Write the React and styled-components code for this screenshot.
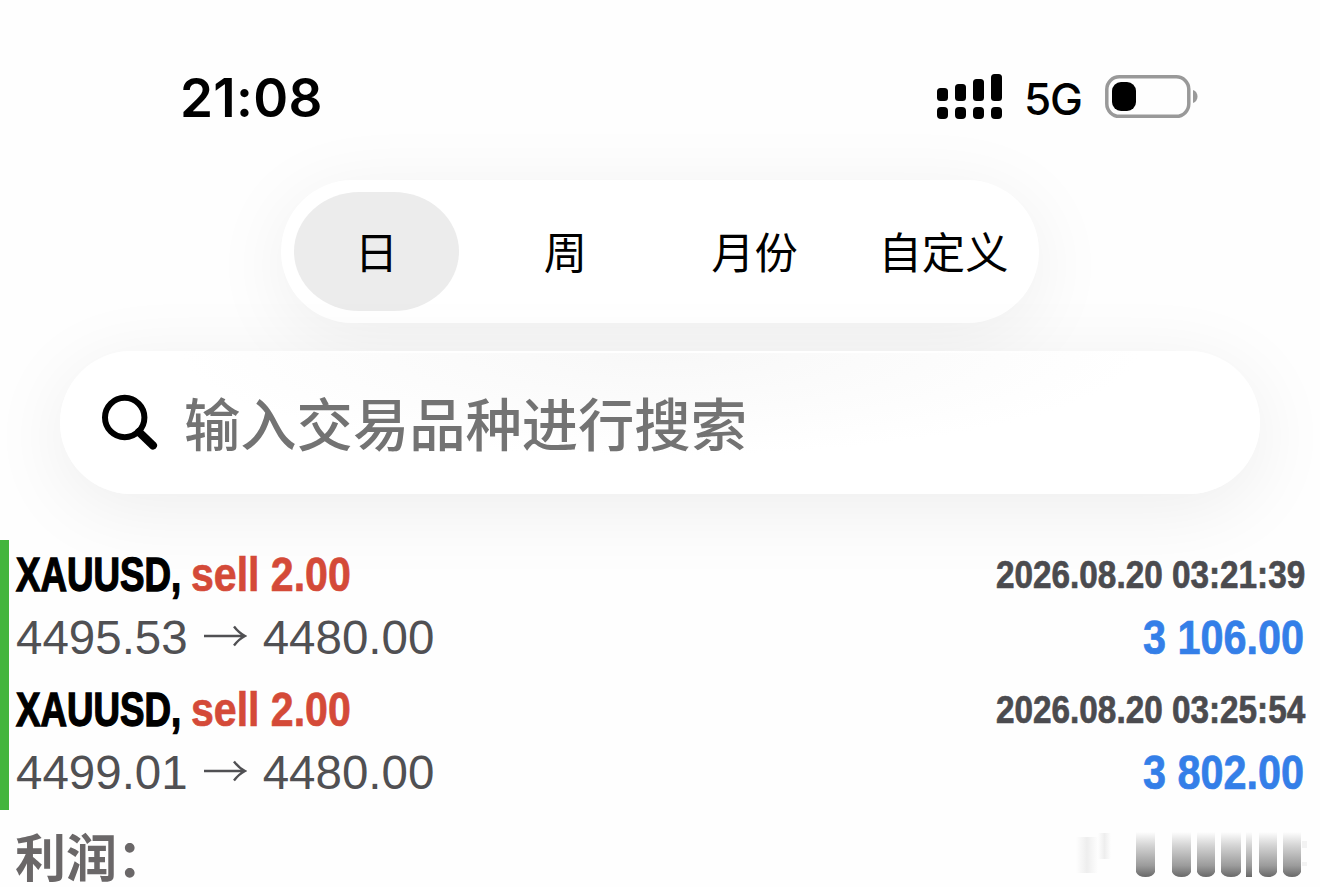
import React from "react";
import styled, { createGlobalStyle } from "styled-components";

const GlobalStyle = createGlobalStyle`
  * {
    box-sizing: border-box;
  }

  body {
    margin: 0;
    background-color: #fefefe;
    overflow: hidden;
  }
`;

const Screen = styled.div`
  width: 1320px;
  height: 887px;
  display: flex;
  flex-direction: column;
  overflow: hidden;
  font-family: "Liberation Sans", "Noto Sans CJK SC", sans-serif;
`;

const StatusBar = styled.header`
  flex: none;
  height: 180px;
  padding: 62px 122px 0 180px;
  display: flex;
  justify-content: space-between;
  align-items: flex-start;
  font-family: Inter, sans-serif;
  color: #000000;
`;

const Time = styled.span`
  font-size: 53px;
  font-weight: 600;
  line-height: 73px;
  letter-spacing: 0.3px;
`;

const StatusIcons = styled.div`
  height: 70px;
  display: flex;
  align-items: center;
`;

const Network = styled.span`
  width: 58px;
  margin: 4px 23px 0 21px;
  font-size: 44px;
  font-weight: 500;
  line-height: 60px;
  letter-spacing: -1.2px;
  white-space: nowrap;
`;

const Tabs = styled.nav`
  flex: none;
  width: 758px;
  height: 143px;
  margin-left: 281px;
  padding: 12px 13px;
  display: flex;
  gap: 24px;
  border-radius: 72px;
  background-color: #ffffff;
  box-shadow: 0 14px 80px rgba(0, 0, 0, 0.068);
`;

const Tab = styled.button`
  width: 165px;
  height: 119px;
  padding: 0 0 3px;
  border: none;
  border-radius: 66px / 60px;
  background-color: ${(props) => (props.$active ? "#ececec" : "transparent")};
  color: #000000;
  font-family: Inter, "Noto Sans CJK SC", sans-serif;
  font-size: 43.3px;
  white-space: nowrap;
`;

const SearchBox = styled.div`
  flex: none;
  position: relative;
  width: 1200px;
  height: 143px;
  margin: 28px 0 46px 60px;
  padding-left: 41px;
  display: flex;
  align-items: center;
  border-radius: 72px;
  background: radial-gradient(ellipse 480px 105px at 50% 0, #f8f8f8, #ffffff);
  box-shadow: 0 14px 80px rgba(0, 0, 0, 0.072);
`;

const Highlight = styled.i`
  position: absolute;
  left: 150px;
  top: 0;
  width: 900px;
  height: 2px;
  background: linear-gradient(90deg, transparent, #ffffff 20%, #ffffff 80%, transparent);
`;

const Placeholder = styled.span`
  margin-left: 25px;
  padding-bottom: 2px;
  font-family: "Noto Sans CJK SC", sans-serif;
  font-size: 56.3px;
  font-weight: 500;
  line-height: 80px;
  color: #737373;
`;

const Deals = styled.main`
  flex: none;
  height: 270px;
  border-left: 9px solid #43b53c;
`;

const Deal = styled.section`
  height: 135px;
  padding: 3px 15px 0 7px;
`;

const Line = styled.div`
  height: 63px;
  display: flex;
  align-items: center;
  justify-content: space-between;
`;

const Group = styled.div`
  display: flex;
  align-items: center;
`;

/* $width is the room the squeezed text takes up in the line */
const Condensed = styled.span`
  width: ${(props) => props.$width}px;
  margin-right: ${(props) => props.$gap || 0}px;
  font-size: ${(props) => props.$size || 48}px;
  font-weight: 700;
  line-height: 63px;
  color: ${(props) => props.$color};
  white-space: nowrap;
  -webkit-text-stroke: ${(props) => props.$stroke || 0.7}px ${(props) => props.$color};
  transform: scaleX(${(props) => props.$scale});
  transform-origin: left center;
`;

const Price = styled.span`
  font-size: 47.5px;
  line-height: 63px;
  color: #505053;
`;

const Arrow = styled.svg`
  margin: 0 16px 3px 15px;
`;

const Total = styled.footer`
  flex: 1;
  min-height: 0;
  padding: 0 12px 0 15px;
  display: flex;
  align-items: flex-start;
  justify-content: space-between;
`;

const TotalLabel = styled.span`
  padding-top: 24px;
  font-size: 51px;
  font-weight: 700;
  line-height: 51px;
  color: #6a6768;
`;

const DEALS = [
  { id: 1, open: "4495.53", close: "4480.00", time: "2026.08.20 03:21:39", profit: "3 106.00" },
  { id: 2, open: "4499.01", close: "4480.00", time: "2026.08.20 03:25:54", profit: "3 802.00" },
];

const TABS = ["日", "周", "月份", "自定义"];

const SIGNAL = [
  { x: 0, y: 14, h: 13 },
  { x: 18, y: 10, h: 17 },
  { x: 36, y: 5, h: 22 },
  { x: 54, y: 0, h: 27 },
];

const SMEARS = [
  { x: 66, w: 19 },
  { x: 102, w: 19 },
  { x: 127, w: 18 },
  { x: 151, w: 20 },
  { x: 176, w: 6 },
  { x: 189, w: 18 },
  { x: 213, w: 18 },
];

function SignalIcon() {
  return (
    <svg width="66" height="46" viewBox="0 0 66 46">
      {SIGNAL.map((bar) => (
        <g key={bar.x}>
          <rect x={bar.x} y={bar.y} width="11" height={bar.h} rx="3.5" />
          <rect x={bar.x} y="33" width="11" height="12" rx="4" />
        </g>
      ))}
    </svg>
  );
}

function BatteryIcon() {
  return (
    <svg width="93" height="44" viewBox="0 0 93 44">
      <rect x="1.8" y="1.8" width="82" height="39.5" rx="12.5" fill="none" stroke="#999999" strokeWidth="3.5" />
      <rect x="7" y="7" width="24" height="29" rx="9" />
      <path d="M88 15c6 2 6 11 0 13z" fill="#999999" />
    </svg>
  );
}

function SearchIcon() {
  return (
    <svg width="58" height="58" viewBox="0 0 58 58" fill="none" stroke="#000000">
      <circle cx="23.7" cy="23.5" r="19.7" strokeWidth="6" />
      <path d="M38 38L52 51.5" strokeWidth="8" strokeLinecap="round" />
    </svg>
  );
}

function SmearedTotal() {
  return (
    <svg width="238" height="77" viewBox="0 0 238 77">
      <defs>
        <linearGradient id="smear" x1="0" y1="22" x2="0" y2="67" gradientUnits="userSpaceOnUse">
          <stop offset="0" stopColor="#fefefe" />
          <stop offset="0.3" stopColor="#d4d4d4" />
          <stop offset="0.75" stopColor="#9b9b9b" />
          <stop offset="1" stopColor="#686868" />
        </linearGradient>
        <linearGradient id="ghost" x1="0" y1="0" x2="1" y2="0">
          <stop offset="0" stopColor="#fefefe" />
          <stop offset="0.5" stopColor="#eeeeee" />
          <stop offset="1" stopColor="#fefefe" />
        </linearGradient>
      </defs>
      <rect x="6" y="27" width="22" height="36" fill="url(#ghost)" />
      <rect x="28" y="23" width="13" height="26" fill="url(#ghost)" />
      {SMEARS.map(({ x, w }) => (
        <path
          key={x}
          d={w < 10 ? `M${x} 22h${w}v45h${-w}z` : `M${x} 22h${w}v40q-2 5-${w / 2} 5t-${w / 2}-5z`}
          fill="url(#smear)"
        />
      ))}
      <path d="M232 31h5v7h-5zM232 52h5v4h-5z" fill="#f3f3f3" />
    </svg>
  );
}

function App() {
  return (
    <>
      <GlobalStyle />
      <Screen>
        <StatusBar>
          <Time>21:08</Time>
          <StatusIcons>
            <SignalIcon />
            <Network>5G</Network>
            <BatteryIcon />
          </StatusIcons>
        </StatusBar>
        <Tabs>
          {TABS.map((label, i) => (
            <Tab key={label} $active={i === 0}>{label}</Tab>
          ))}
        </Tabs>
        <SearchBox>
          <Highlight />
          <SearchIcon />
          <Placeholder>输入交易品种进行搜索</Placeholder>
        </SearchBox>
        <Deals>
          {DEALS.map((deal) => (
            <Deal key={deal.id}>
              <Line>
                <Group>
                  <Condensed $width={166} $gap={9} $scale={0.765} $stroke={1.4} $color="#000000">XAUUSD,</Condensed>
                  <Condensed $width={160} $scale={0.855} $color="#d44a38">sell 2.00</Condensed>
                </Group>
                <Condensed $width={309} $size={38.5} $scale={0.865} $color="#4b4b4f">{deal.time}</Condensed>
              </Line>
              <Line>
                <Group>
                  <Price>{deal.open}</Price>
                  <Arrow width="44" height="24" viewBox="0 0 44 24" fill="none" stroke="#505053" strokeWidth="2.4">
                    <path d="M1 12h41M31 2.5q5 6.500 11 9.500q-6 3-11 9.500" />
                  </Arrow>
                  <Price>{deal.close}</Price>
                </Group>
                <Condensed $width={162} $scale={0.862} $color="#347fe8">{deal.profit}</Condensed>
              </Line>
            </Deal>
          ))}
        </Deals>
        <Total>
          <TotalLabel>利润：</TotalLabel>
          <SmearedTotal />
        </Total>
      </Screen>
    </>
  );
}

export default App;
